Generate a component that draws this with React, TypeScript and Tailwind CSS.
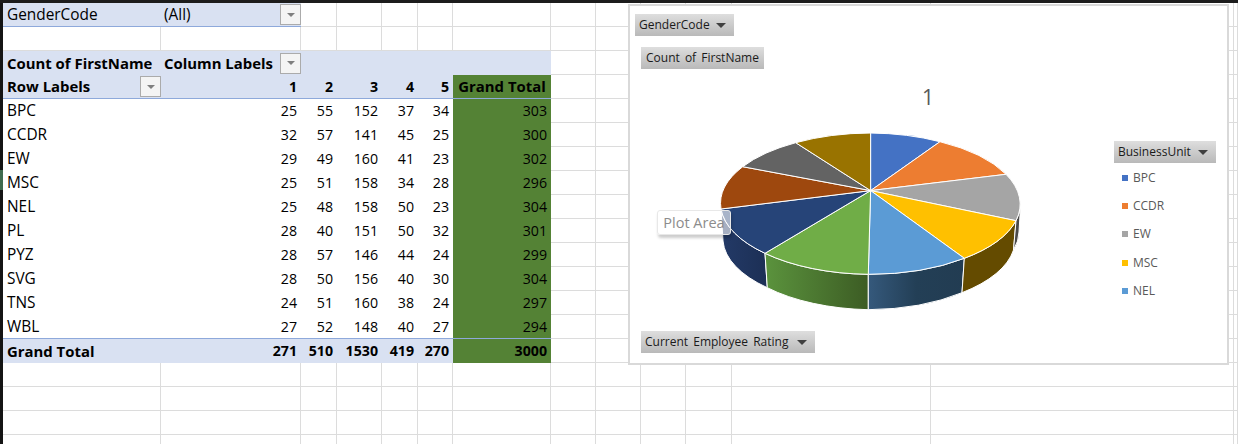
const rows: [string, number[], number][] = [
  ['BPC', [25, 55, 152, 37, 34], 303],
  ['CCDR', [32, 57, 141, 45, 25], 300],
  ['EW', [29, 49, 160, 41, 23], 302],
  ['MSC', [25, 51, 158, 34, 28], 296],
  ['NEL', [25, 48, 158, 50, 23], 304],
  ['PL', [28, 40, 151, 50, 32], 301],
  ['PYZ', [28, 57, 146, 44, 24], 299],
  ['SVG', [28, 50, 156, 40, 30], 304],
  ['TNS', [24, 51, 160, 38, 24], 297],
  ['WBL', [27, 52, 148, 40, 27], 294],
];
const totals = [271, 510, 1530, 419, 270];
const legend = [
  ['BPC', 'bg-[#4472c4]'],
  ['CCDR', 'bg-[#ed7d31]'],
  ['EW', 'bg-[#a5a5a5]'],
  ['MSC', 'bg-[#ffc000]'],
  ['NEL', 'bg-[#5b9bd5]'],
];

function Empty({ n = 1 }: { n?: number }) {
  return (
    <>
      {Array.from({ length: n }, (_, i) => (
        <div key={i} className="border-r border-b border-[#dcdcdc]" />
      ))}
    </>
  );
}

function FilterButton() {
  return (
    <span className="flex h-[21px] w-[21px] shrink-0 items-center justify-center border border-[#ababab] bg-[#f4f4f4]">
      <span className="h-0 w-0 border-x-[4px] border-t-[4px] border-x-transparent border-t-[#7f7f7f]" />
    </span>
  );
}

function FieldButton({ label, arrow = true, className }: { label: string; arrow?: boolean; className: string }) {
  return (
    <div className={`flex h-[22px] items-center justify-between bg-gradient-to-b from-[#dedede] to-[#b9b9b9] text-[12px] font-normal text-[#1a1a1a] [font-family:'Open_Sans',sans-serif] [word-spacing:2px] ${className}`}>
      <span className="whitespace-nowrap">{label}</span>
      {arrow && <span className="h-0 w-0 border-x-[5px] border-t-[5px] border-x-transparent border-t-[#404040]" />}
    </div>
  );
}

function PieChart() {
  return (
    <svg className="absolute left-[85px] top-[122px]" width="310" height="187" viewBox="715 128 310 187">
      <defs>
        <linearGradient id="wallGreen" x1="0" x2="1" y1="0" y2="0">
          <stop offset="0" stopColor="#5b933d" />
          <stop offset="1" stopColor="#3c5c24" />
        </linearGradient>
        <linearGradient id="wallBlue" x1="0" x2="1" y1="0" y2="0">
          <stop offset="0" stopColor="#35597c" />
          <stop offset="0.5" stopColor="#233f56" />
          <stop offset="1" stopColor="#223c52" />
        </linearGradient>
        <linearGradient id="wallNavy" x1="0" x2="1" y1="0" y2="0">
          <stop offset="0" stopColor="#233a67" />
          <stop offset="1" stopColor="#1c2f55" />
        </linearGradient>
      </defs>
      <g stroke="#fff" strokeWidth="1" strokeLinejoin="round">
        {/* side walls */}
        <path d="M721 209 A150 70.5 0 0 0 765 253.3 L767.3 287.7 A147 69 0 0 1 723 241 Z" fill="url(#wallNavy)" />
        <path d="M765 253.3 A150 70.5 0 0 0 868.3 274.3 L868.3 309.7 A147 69 0 0 1 767.3 287.7 Z" fill="url(#wallGreen)" />
        <path d="M868.3 274.3 A150 70.5 0 0 0 964.3 258.3 L962 292.7 A147 69 0 0 1 868.3 309.7 Z" fill="url(#wallBlue)" />
        <path d="M964.3 258.3 A150 70.5 0 0 0 1016 220.7 L1013.5 250 A147 69 0 0 1 962 292.7 Z" fill="#644b00" />
        <path d="M1016 220.7 A150 70.5 0 0 0 1020.6 205 L1019 232 A147 69 0 0 1 1013.5 250 Z" fill="#4a4a4a" />
        {/* top face */}
        <path d="M870.6 190.6 L870.6 133 A150 70.5 0 0 1 940 141.7 Z" fill="#4472c4" />
        <path d="M870.6 190.6 L940 141.7 A150 70.5 0 0 1 1006 174.3 Z" fill="#ed7d31" />
        <path d="M870.6 190.6 L1006 174.3 A150 70.5 0 0 1 1016 220.7 Z" fill="#a5a5a5" />
        <path d="M870.6 190.6 L1016 220.7 A150 70.5 0 0 1 964.3 258.3 Z" fill="#ffc000" />
        <path d="M870.6 190.6 L964.3 258.3 A150 70.5 0 0 1 868.3 274.3 Z" fill="#5b9bd5" />
        <path d="M870.6 190.6 L868.3 274.3 A150 70.5 0 0 1 765 253.3 Z" fill="#70ad47" />
        <path d="M870.6 190.6 L765 253.3 A150 70.5 0 0 1 721 209 Z" fill="#264478" />
        <path d="M870.6 190.6 L721 209 A150 70.5 0 0 1 742.7 166.7 Z" fill="#9e480e" />
        <path d="M870.6 190.6 L742.7 166.7 A150 70.5 0 0 1 795.7 142.7 Z" fill="#636363" />
        <path d="M870.6 190.6 L795.7 142.7 A150 70.5 0 0 1 870.6 133 Z" fill="#997300" />
      </g>
    </svg>
  );
}

export default function App() {
  const head = 'flex items-center whitespace-nowrap bg-[#d9e1f2] text-[14.9px] font-bold text-black';
  const headNum = 'flex items-center justify-end whitespace-nowrap bg-[#d9e1f2] pr-[4px] text-[14.2px] font-bold text-black';
  const num = 'flex items-center justify-end pr-[4px] text-[14.2px]';
  const label = 'flex items-center pl-[4px] text-[15.4px]';
  return (
    <div className="relative flex h-[444px] w-[1238px] flex-col overflow-hidden bg-white text-[15.4px] text-black [font-family:'Open_Sans',sans-serif]">
      <div className="h-[3px] shrink-0 bg-[#1c1c1c]" />
      <div className="flex flex-1">
        <div className="flex w-[3px] shrink-0 flex-col bg-[#141414]">
          <div className="h-[167px]" />
          <div className="h-[20px] bg-[#3f6b4f]" />
        </div>
        <div className="grid flex-1 grid-cols-[158px_140px_36px_45px_36px_35px_98px_45px_45px_45px_46px_199px_303px_1fr] grid-rows-[repeat(19,24px)]">
          {/* page filter */}
          <div className="flex items-center border-b border-[#8ea9db] bg-[#d9e1f2] pl-[4px]">GenderCode</div>
          <div className="flex items-center justify-between border-b border-[#8ea9db] bg-[#d9e1f2] pl-[3px]">
            (All)
            <FilterButton />
          </div>
          <Empty n={12} />
          <Empty n={14} />

          {/* pivot header */}
          <div className={`${head} pl-[4px]`}>Count of FirstName</div>
          <div className={`${head} justify-between pl-[3px]`}>
            Column Labels
            <FilterButton />
          </div>
          <div className={`${head} col-span-5`} />
          <Empty n={7} />

          <div className={`${head} justify-between border-b border-[#8ea9db] pl-[4px]`}>
            Row Labels
            <FilterButton />
          </div>
          {['1', '2', '3', '4', '5'].map((c) => (
            <div key={c} className={`${headNum} border-b border-[#8ea9db]`}>
              {c}
            </div>
          ))}
          <div className="flex items-center justify-center whitespace-nowrap border-b border-[#8ea9db] bg-[#548235] text-[14.9px] font-bold">Grand Total</div>
          <Empty n={7} />

          {/* data rows */}
          {rows.map(([name, vals, total], r) => (
            <div key={name} className="contents">
              <div className={`${label} ${r === 9 ? 'border-b border-[#8ea9db]' : ''}`}>{name}</div>
              {vals.map((v, i) => (
                <div key={i} className={`${num} ${r === 9 ? 'border-b border-[#8ea9db]' : ''}`}>{v}</div>
              ))}
              <div className={`${num} bg-[#548235] ${r === 9 ? 'border-b border-[#8ea9db]' : ''}`}>{total}</div>
              <Empty n={7} />
            </div>
          ))}

          {/* grand total */}
          <div className={`${head} pl-[4px]`}>Grand Total</div>
          {totals.map((t) => (
            <div key={t} className={headNum}>{t}</div>
          ))}
          <div className={`${num} bg-[#548235] font-bold`}>3000</div>
          <Empty n={7} />

          <Empty n={56} />
        </div>
      </div>

      {/* chart floats over the sheet */}
      <div className="absolute left-[628px] top-[4px] flex h-[361px] w-[601px] flex-col border-2 border-[#d9d9d9] bg-white pb-[10px] pl-[11px] pt-[8px]">
        <FieldButton label="GenderCode" className="-ml-[6px] w-[99px] pl-[4px] pr-[8px]" />
        <FieldButton label="Count of FirstName" arrow={false} className="mt-[11px] w-[123px] pl-[5px]" />
        <div className="mt-[16px] w-[574px] text-center text-[21px] leading-[24px] text-[#595959]">1</div>
        <FieldButton label="Current Employee Rating" className="mt-auto w-[174px] pl-[4px] pr-[8px]" />

        <PieChart />

        <div className="absolute left-[484px] top-[135px] w-[102px]">
          <FieldButton label="BusinessUnit" className="w-full pl-[4px] pr-[8px]" />
          <div className="mt-[1px] flex flex-col">
            {legend.map(([name, color]) => (
              <div key={name} className="flex h-[28.2px] items-center gap-[5px] pl-[8px] text-[12px] text-[#595959]">
                <span className={`h-[6px] w-[6px] ${color}`} />
                {name}
              </div>
            ))}
          </div>
        </div>

        <div className="absolute left-[27px] top-[204px] flex h-[25px] w-[74px] items-center justify-center rounded-[3px] border border-[#e8e8e8] bg-white/60 text-[14.5px] text-[#8c8c8c] shadow-[1px_3px_3px_rgba(0,0,0,0.2)]">
          Plot Area
        </div>
      </div>
    </div>
  );
}
